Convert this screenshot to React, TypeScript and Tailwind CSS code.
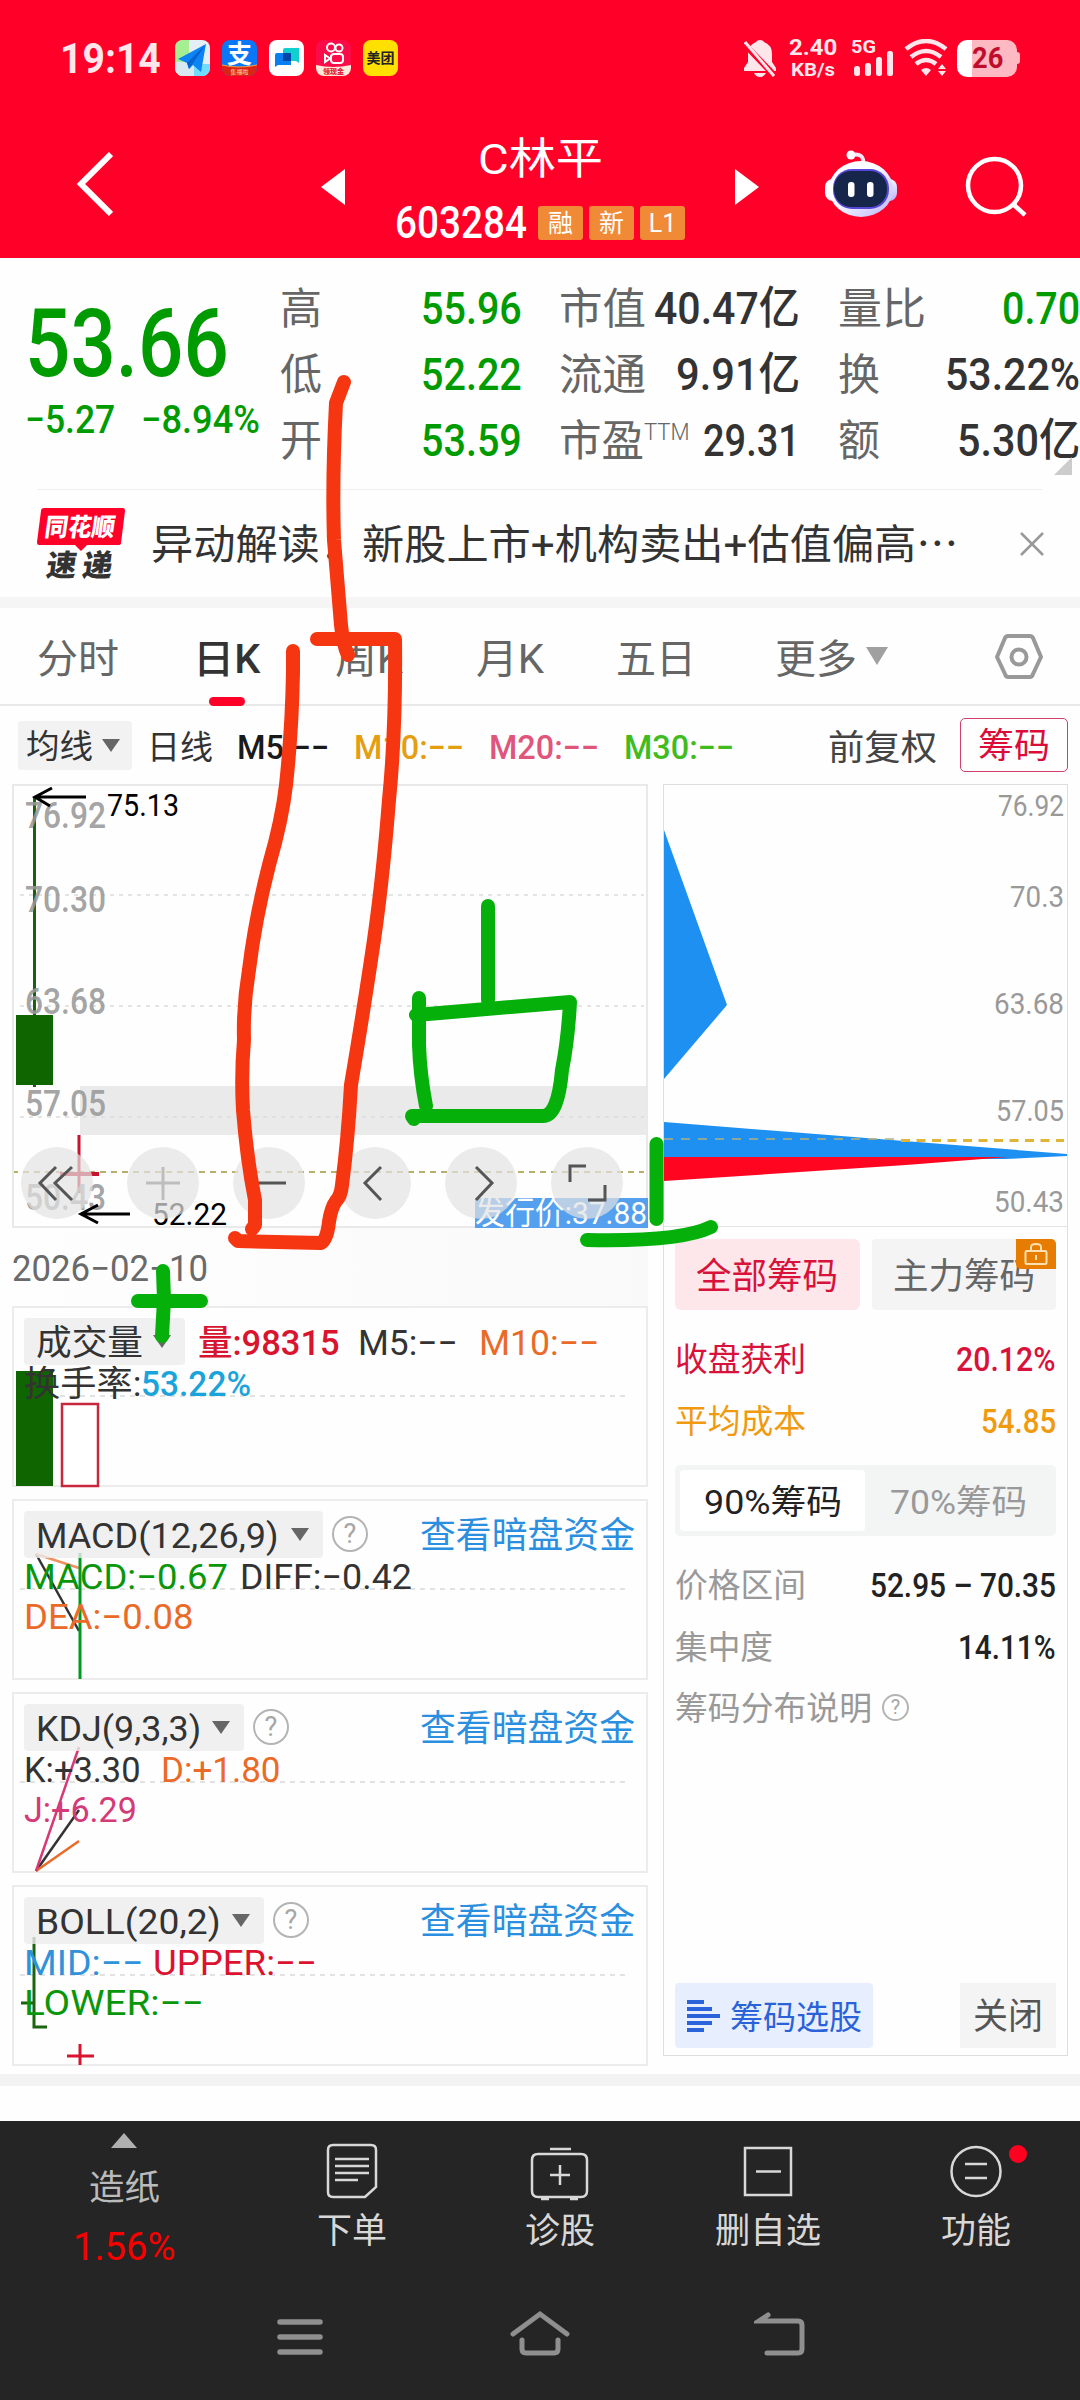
import { useLayoutEffect, useRef, useState, type ReactNode } from 'react';

// ---------------------------------------------------------------------------
// Fit — squeezes one line of text to the width of its box
// ---------------------------------------------------------------------------
interface FitProps {
  children: ReactNode;
  className?: string;
}

function Fit({ children, className = '' }: FitProps) {
  const outer = useRef<HTMLSpanElement>(null);
  const inner = useRef<HTMLSpanElement>(null);
  const [scale, setScale] = useState(1);

  useLayoutEffect(() => {
    if (!outer.current || !inner.current) return;
    setScale(outer.current.clientWidth / inner.current.offsetWidth);
  }, []);

  return (
    <span ref={outer} className={`block shrink-0 whitespace-nowrap leading-none ${className}`}>
      <span ref={inner} className="inline-block origin-left" style={{ transform: `scaleX(${scale})` }}>
        {children}
      </span>
    </span>
  );
}

function Caret({ className = 'fill-[#666]' }: { className?: string }) {
  return (
    <svg viewBox="0 0 18 13" className={`h-[13px] w-[18px] shrink-0 ${className}`}>
      <path d="M0 0h18L9 13z" />
    </svg>
  );
}

function Help({ className = '' }: { className?: string }) {
  return (
    <span
      className={`flex shrink-0 items-center justify-center rounded-full border-[#b4b4b4] leading-none text-[#a6a6a6] ${className}`}
    >
      ?
    </span>
  );
}

// ---------------------------------------------------------------------------
// StatusBar
// ---------------------------------------------------------------------------
function StatusBar() {
  return (
    <div className="flex h-[116px] items-center pl-[60px] text-white">
      <Fit className="w-[101px] text-[43px] font-bold text-[#ffe6ea]">19:14</Fit>

      <div className="ml-[14px] flex gap-[12px]">
        <svg viewBox="0 0 35 36" className="h-9 w-[35px] rounded-[8px] bg-[#e4eef5]">
          <path d="M0 0h14v36H0z" fill="#a5ee91" />
          <path d="M19 24h16v12H19z" fill="#72dcff" />
          <path d="M0 22h19v14H0z" fill="#d9e9f2" />
          <path d="M31 4 3 19l9 4 2 6 4-4 8 7z" fill="#0d84f5" />
          <path d="M31 4 12 23l2 6z" fill="#0763cf" />
        </svg>
        <svg viewBox="0 0 35 36" className="h-9 w-[35px] rounded-[8px] bg-[#0877f8]">
          <text x="17.5" y="23" fontSize="25" fontWeight="700" textAnchor="middle" fill="#fff">支</text>
          <path d="M0 25q17 4 35 0v11H0z" fill="#d92416" />
          <path d="M0 25q17 4 35 0" stroke="#f5a142" fill="none" />
          <text x="17.5" y="34" fontSize="6" textAnchor="middle" fill="#ffd9a0">集福啦</text>
        </svg>
        <svg viewBox="0 0 35 36" className="h-9 w-[35px] rounded-[8px] bg-white">
          <path d="M16 8h14v15l-3-2H14V10q0-2 2-2z" fill="#0fd0cf" />
          <path d="M8 13h14v12H9l-3 2V15q0-2 2-2z" fill="#0a7ff0" />
          <path d="M14 13h8v8h-8z" fill="#0445a8" />
        </svg>
        <svg viewBox="0 0 35 36" className="h-9 w-[35px] rounded-[8px] bg-[#fb0b48]">
          <g fill="none" stroke="#fff" strokeWidth="2">
            <circle cx="15" cy="7.500" r="4" />
            <circle cx="23" cy="8" r="3.500" />
            <rect x="15" y="14" width="12" height="9" rx="3" />
            <path d="m9 15 5 3.500L9 22z" />
          </g>
          <path d="M0 25q17 4 35 0v11H0z" fill="#ffe9d8" />
          <text x="17.500" y="34" fontSize="7" fontWeight="900" textAnchor="middle" fill="#e0203a">领现金</text>
        </svg>
        <svg viewBox="0 0 35 36" className="h-9 w-[35px] rounded-[8px] bg-[#ffe000]">
          <text x="17.500" y="23" fontSize="14" fontWeight="700" textAnchor="middle" fill="#222">美团</text>
        </svg>
      </div>

      <svg viewBox="0 0 32 38" className="ml-[346px] h-[38px] w-8" fill="#ffe6ea">
        <path d="M16 1q-3 0-4 2-8 3-8 12v8l-4 6v3h32v-3l-4-6v-8q0-9-8-12-1-2-4-2zM10 34h12q-2 4-6 4t-6-4z" />
        <path d="M0 5 30 36" stroke="#ff0029" strokeWidth="6" />
        <path d="M1 3 30 37" stroke="#ffe6ea" strokeWidth="3" />
      </svg>
      <div className="ml-[13px] flex w-[48px] flex-col items-center gap-px font-bold text-[#ffe6ea]">
        <Fit className="w-[48px] text-[22px]">2.40</Fit>
        <Fit className="w-[44px] text-[19px]">KB/s</Fit>
      </div>
      <svg viewBox="0 0 44 38" className="ml-[14px] h-[38px] w-11 overflow-visible" fill="#ffe6ea">
        <text x="0" y="14" fontSize="19" fontWeight="700" textLength="25" lengthAdjust="spacingAndGlyphs">5G</text>
        <rect x="3" y="27" width="6" height="10" rx="2.500" />
        <rect x="14" y="24" width="6" height="13" rx="2.500" />
        <rect x="25" y="18" width="6" height="19" rx="2.500" />
        <rect x="36" y="12" width="6" height="25" rx="2.500" />
      </svg>
      <svg viewBox="0 0 44 38" className="ml-[9px] h-[38px] w-11" fill="none" stroke="#ffe6ea" strokeWidth="4.500">
        <path d="M2 10q20-16 40 0M7 18q15-12 30 0M12 25q10-8 20 0" />
        <path d="M17 31q5-4 10 0l-5 6zM34 30l4-5 4 5zM34 32l4 5 4-5z" fill="#ffe6ea" stroke="none" />
      </svg>
      <div className="ml-[9px] flex items-center">
        <div className="flex h-[37px] w-[60px] items-center justify-center rounded-[10px] bg-linear-to-r from-white from-25% to-[#ffb9c2] to-25%">
          <Fit className="w-[31px] text-[29px] font-bold text-[#c00d2c]">26</Fit>
        </div>
        <div className="h-3 w-[3px] rounded-r-full bg-[#ffb9c2]" />
      </div>
    </div>
  );
}

// ---------------------------------------------------------------------------
// TitleBar
// ---------------------------------------------------------------------------
function TitleBar() {
  return (
    <div className="flex h-[142px] text-white">
      <svg viewBox="77 151 36 66" className="mt-[35px] ml-[77px] h-[66px] w-9" fill="none" stroke="#fff" strokeWidth="6">
        <path d="m111 154-30 30 30 30" />
      </svg>
      <svg viewBox="0 0 24 36" className="mt-[53px] ml-[208px] h-9 w-6 fill-white">
        <path d="M24 0v36L0 18z" />
      </svg>
      <div className="ml-[50px] flex w-[290px] flex-col items-center pt-[22px]">
        <Fit className="h-[46px] w-[125px] text-[43px]">C林平</Fit>
        <div className="mt-[17px] flex items-center gap-[6px]">
          <Fit className="mr-[5px] w-[132px] text-[44px] font-medium">603284</Fit>
          {['融', '新', 'L1'].map((tag) => (
            <span
              key={tag}
              className="flex h-[34px] w-[45px] items-center justify-center rounded-[3px] bg-[#f18a36] text-[25px] leading-none"
            >
              {tag}
            </span>
          ))}
        </div>
      </div>
      <svg viewBox="0 0 24 36" className="mt-[53px] ml-[50px] h-9 w-6 fill-white">
        <path d="M0 0v36l24-18z" />
      </svg>
      <svg viewBox="824 150 74 74" className="mt-[34px] ml-[65px] size-[74px]">
        <defs>
          <linearGradient id="shell" x1="0" y1="0" x2="1" y2="1">
            <stop offset="0.400" stopColor="#ffffff" />
            <stop offset="1" stopColor="#b9b3ff" />
          </linearGradient>
        </defs>
        <rect x="825" y="179" width="72" height="22" rx="8" fill="url(#shell)" />
        <path d="M851 155q14-3 12 10" stroke="#f6e6f5" strokeWidth="4" fill="none" />
        <circle cx="851" cy="155" r="4.500" fill="#fff" />
        <ellipse cx="861" cy="189" rx="32" ry="28" fill="url(#shell)" />
        <rect x="833" y="169" width="56" height="40" rx="19" fill="#5747d8" />
        <rect x="834" y="171" width="53" height="36" rx="17" fill="#16264a" />
        <rect x="848" y="182" width="6.500" height="15" rx="3" fill="#fff" />
        <rect x="867" y="182" width="6.500" height="15" rx="3" fill="#fff" />
      </svg>
      <svg viewBox="964 154 64 66" className="mt-[38px] ml-[66px] h-[66px] w-16" fill="none" stroke="#fff" strokeWidth="4.500">
        <circle cx="994.500" cy="185.500" r="26.500" />
        <path d="m1013 204 12 11" />
      </svg>
    </div>
  );
}

// ---------------------------------------------------------------------------
// Quote — last price and the key figures
// ---------------------------------------------------------------------------
const FIGURES = [
  {
    box: 'w-[242px]',
    rows: [
      { label: '高', lw: 'w-[42px]', value: '55.96', vw: 'w-[101px]', color: 'text-[#009b00]' },
      { label: '低', lw: 'w-[42px]', value: '52.22', vw: 'w-[101px]', color: 'text-[#009b00]' },
      { label: '开', lw: 'w-[42px]', value: '53.59', vw: 'w-[101px]', color: 'text-[#009b00]' },
    ],
  },
  {
    box: 'w-[241px] ml-[37px]',
    rows: [
      { label: '市值', lw: 'w-[87px]', value: '40.47亿', vw: 'w-[146px]', color: 'text-[#333]' },
      { label: '流通', lw: 'w-[87px]', value: '9.91亿', vw: 'w-[124px]', color: 'text-[#333]' },
      { label: '市盈', lw: 'w-[85px]', value: '29.31', vw: 'w-[97px]', color: 'text-[#333]' },
    ],
  },
  {
    box: 'w-[242px] ml-[38px]',
    rows: [
      { label: '量比', lw: 'w-[88px]', value: '0.70', vw: 'w-[78px]', color: 'text-[#009b00]' },
      { label: '换', lw: 'w-[42px]', value: '53.22%', vw: 'w-[135px]', color: 'text-[#333]' },
      { label: '额', lw: 'w-[42px]', value: '5.30亿', vw: 'w-[123px]', color: 'text-[#333]' },
    ],
  },
];

function Quote() {
  return (
    <div className="relative flex h-[231px] bg-[#fefefe]">
      <div className="w-[280px] pt-[39px] pl-[25px] text-[#009b00]">
        <Fit className="h-[93px] w-[204px] text-[94px] font-medium">53.66</Fit>
        <div className="mt-[11px] flex text-[39px] font-medium">
          <Fit className="w-[90px]">−5.27</Fit>
          <Fit className="ml-[26px] w-[119px]">−8.94%</Fit>
        </div>
      </div>
      {FIGURES.map((col, i) => (
        <div key={i} className={`pt-[17px] ${col.box}`}>
          {col.rows.map((row) => (
            <div key={row.label} className="flex h-[66px] items-center">
              <Fit className={`pt-[2px] text-[43px] text-[#666] ${row.lw}`}>{row.label}</Fit>
              {row.label === '市盈' && <Fit className="mb-4 w-[46px] text-[24px] font-light text-[#666]">TTM</Fit>}
              <Fit className={`ml-auto text-[45px] font-medium ${row.vw} ${row.color}`}>{row.value}</Fit>
            </div>
          ))}
        </div>
      ))}
      <svg viewBox="0 0 18 18" className="absolute right-2 bottom-[14px] size-[18px] fill-[#ccc]">
        <path d="M18 0v18H0z" />
      </svg>
    </div>
  );
}

function NewsTicker() {
  return (
    <div className="flex h-[108px] items-center bg-[#fefefe] pl-[37px]">
      <div className="w-full">
        <div className="-mt-px mr-[38px] h-[2px] bg-[#efefef]" />
        <div className="flex h-[107px] items-center">
          <svg viewBox="37 507 88 72" className="h-[72px] w-[88px] overflow-visible">
            <path d="M44 507h79q2 0 2 3l-4 32q0 2-3 2H87l-6 6-6-6H39q-2 0-2-3l4-31q0-3 3-3z" fill="#ff0029" />
            <g transform="skewX(-8)" fontWeight="900">
              <text x="119" y="535" fontSize="25" textLength="70" lengthAdjust="spacingAndGlyphs" fill="#fff">同花顺</text>
              <text x="126" y="575" fontSize="30" textLength="66" fill="#333">速递</text>
            </g>
          </svg>
          <Fit className="ml-[26px] w-[808px] pt-[4px] text-[41px] text-[#333]">异动解读：新股上市+机构卖出+估值偏高⋯</Fit>
          <svg viewBox="0 0 24 24" className="ml-[61px] size-6" stroke="#999" strokeWidth="2.500">
            <path d="m1 1 22 22M23 1 1 23" />
          </svg>
        </div>
      </div>
    </div>
  );
}

// ---------------------------------------------------------------------------
// PeriodTabs
// ---------------------------------------------------------------------------
const TABS = [
  { label: '分时', box: 'w-[82px]' },
  { label: '日K', box: 'w-[67px] ml-[74px]', active: true },
  { label: '周K', box: 'w-[68px] ml-[75px]' },
  { label: '月K', box: 'w-[68px] ml-[73px]' },
  { label: '五日', box: 'w-[80px] ml-[72px]' },
  { label: '更多', box: 'w-[82px] ml-[79px]' },
];

function PeriodTabs() {
  return (
    <div className="flex h-[98px] items-center border-b-2 border-[#e9e9e9] bg-[#fefefe] pl-[37px]">
      {TABS.map((tab) => (
        <div key={tab.label} className={`relative text-[40px] ${tab.box} ${tab.active ? 'font-medium text-[#333]' : 'text-[#666]'}`}>
          <Fit className="mt-[7px]">{tab.label}</Fit>
          {tab.active && <div className="absolute -bottom-[26px] left-[16px] h-[9px] w-9 rounded-full bg-[#ff0029]" />}
        </div>
      ))}
      <svg viewBox="0 0 22 18" className="ml-[9px] h-[18px] w-[22px] fill-[#a0a0a0]">
        <path d="M0 0h22L11 18z" />
      </svg>
      <svg viewBox="0 0 50 48" className="mt-[2px] ml-[106px] h-12 w-[50px]" fill="none" stroke="#999" strokeWidth="4" strokeLinejoin="round">
        <path d="M14 3h22q2 0 3 2l8 19-8 17q-1 3-3 3H14q-2 0-3-3L3 24l8-19q1-2 3-2z" />
        <circle cx="25" cy="24" r="7.500" />
      </svg>
    </div>
  );
}

function AverageBar() {
  return (
    <div className="flex h-[78px] items-center bg-[#fefefe] pl-[18px] text-[33px]">
      <div className="flex h-[49px] w-[114px] items-center justify-between rounded-[3px] bg-[#f2f2f2] pr-3 pl-2 text-[#333]">
        <Fit className="w-[67px] pt-[3px]">均线</Fit>
        <Caret />
      </div>
      <Fit className="ml-[15px] w-[66px] pt-[5px] text-[#333]">日线</Fit>
      <Fit className="ml-[24px] w-[92px] pt-[5px] font-medium text-[#1a1a1a]">M5:−−</Fit>
      <Fit className="ml-[25px] w-[110px] pt-[5px] font-medium text-[#e49e12]">M10:−−</Fit>
      <Fit className="ml-[25px] w-[110px] pt-[5px] font-medium text-[#e0557c]">M20:−−</Fit>
      <Fit className="ml-[25px] w-[110px] pt-[5px] font-medium text-[#40bc20]">M30:−−</Fit>
      <Fit className="ml-[94px] w-[109px] pt-[7px] text-[35px] text-[#444]">前复权</Fit>
      <div className="ml-[23px] flex h-[54px] w-[108px] items-center justify-center rounded-[5px] border-[1.500px] border-[#d0406a] text-[#dc0c38]">
        <Fit className="w-[72px] pt-[2px] text-[35px]">筹码</Fit>
      </div>
    </div>
  );
}

// ---------------------------------------------------------------------------
// CandleChart
// ---------------------------------------------------------------------------
const TOOLS = [
  { id: 'first', d: 'M35 20 19 36l16 17M51 20 34 36l17 17' },
  { id: 'zoom-in', d: 'M19 36h34M36 20v33', faint: true },
  { id: 'zoom-out', d: 'M19 36h34' },
  { id: 'prev', d: 'M42 20 26 36l16 17' },
  { id: 'next', d: 'M31 20l16 16-16 17' },
  { id: 'expand', d: 'M35 19H19v16M54 38v15H37' },
];

function CandleChart() {
  return (
    <div className="relative h-[444px] w-[636px]">
      <svg viewBox="12 784 636 444" className="block h-full w-full overflow-visible">
        <rect x="80" y="1086" width="568" height="49" fill="#eaeaea" />
        <g stroke="#dcdcdc" strokeWidth="1.500" strokeDasharray="4 5">
          <path d="M20 895h624M20 1006h624M20 1117h624" />
        </g>
        <path d="M12 1172h632" stroke="#b8b06a" strokeWidth="2" strokeDasharray="6 5" />
        <rect x="13" y="785" width="634" height="442" fill="none" stroke="#e9e9e9" strokeWidth="2" />
        <path d="M34.500 797v290" stroke="#1c5f10" strokeWidth="3" />
        <rect x="16" y="1015" width="37" height="70" fill="#0f6600" />
        <path d="M79 1135v58" stroke="#c8142f" strokeWidth="3" />
        <path d="M60 1174h39" stroke="#c8142f" strokeWidth="4" />
        <g fill="#999" fillOpacity="0.900" fontSize="36" fontWeight="500">
          <text x="25" y="828" textLength="81" lengthAdjust="spacingAndGlyphs">76.92</text>
          <text x="25" y="912" textLength="81" lengthAdjust="spacingAndGlyphs">70.30</text>
          <text x="25" y="1014" textLength="81" lengthAdjust="spacingAndGlyphs">63.68</text>
          <text x="25" y="1116" textLength="81" lengthAdjust="spacingAndGlyphs">57.05</text>
          <text x="25" y="1210" textLength="81" lengthAdjust="spacingAndGlyphs">50.43</text>
        </g>
        <g stroke="#000" strokeWidth="3" fill="none">
          <path d="M86 797H35M52 788l-17 9 15 9" />
          <path d="M130 1214H81M98 1205l-17 9 17 9" />
        </g>
        <g fontSize="32">
          <text x="107" y="816" textLength="72" lengthAdjust="spacingAndGlyphs">75.13</text>
          <text x="152" y="1225" textLength="75" lengthAdjust="spacingAndGlyphs">52.22</text>
        </g>
        <rect x="475" y="1198" width="173" height="30" fill="#549fee" />
        <text x="475" y="1224" fontSize="32" fill="#fff" textLength="172" lengthAdjust="spacingAndGlyphs">发行价:37.88</text>
      </svg>
      <div className="absolute top-[363px] left-[9px] flex gap-[34px]">
        {TOOLS.map((tool) => (
          <svg key={tool.id} viewBox="0 0 72 72" className="size-[72px] rounded-full bg-[#e2e2e2]/70" fill="none">
            <path d={tool.d} stroke={tool.faint ? '#bdbdbd' : '#555'} strokeWidth="3" />
          </svg>
        ))}
      </div>
    </div>
  );
}

// ---------------------------------------------------------------------------
// Indicator — one framed sub chart below the candles
// ---------------------------------------------------------------------------
interface Part {
  text: string;
  box: string;
}

interface IndicatorProps {
  name: string;
  nameBox: string;
  chipBox: string;
  inline?: Part[];
  lines: Part[][];
  children: ReactNode;
}

function Indicator({ name, nameBox, chipBox, inline, lines, children }: IndicatorProps) {
  return (
    <div className="relative h-[181px] border-2 border-[#ececec] text-[35px]">
      <svg viewBox="14 2 632 177" className="absolute inset-0 h-[177px] w-[632px] overflow-visible" fill="none">
        <path d="M20 90h606" stroke="#d9d9d9" strokeWidth="1.500" strokeDasharray="5 5" />
        {children}
      </svg>
      <div className="relative mt-[10px] flex h-[46px] items-center pl-[10px]">
        <div className={`flex h-[47px] items-center justify-between rounded-[4px] bg-[#ececec]/80 pr-[14px] pl-[12px] text-[#333] ${chipBox}`}>
          <Fit className={`pt-[4px] ${nameBox}`}>{name}</Fit>
          <Caret />
        </div>
        {inline ? (
          inline.map((part) => (
            <Fit key={part.text} className={`pt-[4px] ${part.box}`}>
              {part.text}
            </Fit>
          ))
        ) : (
          <>
            <Help className="ml-[9px] size-[36px] border-[2.500px] text-[27px]" />
            <Fit className="mr-[11px] ml-auto w-[215px] pt-[4px] text-[36px] text-[#2b8fe0]">查看暗盘资金</Fit>
          </>
        )}
      </div>
      {lines.map((line, i) => (
        <div key={i} className="relative flex h-[40px] items-center pl-[10px]">
          {line.map((part) => (
            <Fit key={part.text} className={part.box}>
              {part.text}
            </Fit>
          ))}
        </div>
      ))}
    </div>
  );
}

function Indicators() {
  return (
    <div className="flex flex-col gap-3">
      <Indicator
        name="成交量"
        nameBox="w-[107px]"
        chipBox="w-[161px]"
        inline={[
          { text: '量:98315', box: 'ml-[13px] w-[142px] font-medium text-[#d8142f]' },
          { text: 'M5:−−', box: 'ml-[18px] w-[100px] text-[#333]' },
          { text: 'M10:−−', box: 'ml-[21px] w-[120px] text-[#ea6a28]' },
        ]}
        lines={[
          [
            { text: '换手率:', box: 'w-[117px] text-[#333]' },
            { text: '53.22%', box: 'w-[110px] font-medium text-[#1ba4da]' },
          ],
        ]}
      >
        <rect x="16" y="65" width="37" height="115" fill="#0f6600" />
        <rect x="62" y="98" width="36" height="82" fill="#fff" stroke="#c8283c" strokeWidth="2.500" />
      </Indicator>
      <Indicator
        name="MACD(12,26,9)"
        nameBox="w-[243px]"
        chipBox="w-[299px]"
        lines={[
          [
            { text: 'MACD:−0.67', box: 'w-[204px] text-[#0a960a]' },
            { text: 'DIFF:−0.42', box: 'ml-[12px] w-[172px] text-[#333]' },
          ],
          [{ text: 'DEA:−0.08', box: 'w-[169px] text-[#ea6a28]' }],
        ]}
      >
        <path d="m36 55 43 77" stroke="#333" strokeWidth="2.500" />
        <path d="m36 55 43 14" stroke="#ee9060" strokeWidth="2.500" />
        <path d="M80 54v126" stroke="#009b1c" strokeWidth="3" />
      </Indicator>
      <Indicator
        name="KDJ(9,3,3)"
        nameBox="w-[165px]"
        chipBox="w-[220px]"
        lines={[
          [
            { text: 'K:+3.30', box: 'w-[117px] text-[#333]' },
            { text: 'D:+1.80', box: 'ml-[20px] w-[120px] text-[#ea6a28]' },
          ],
          [{ text: 'J:+6.29', box: 'w-[113px] text-[#d43a78]' }],
        ]}
      >
        <path d="m36 179 43-61" stroke="#333" strokeWidth="2.500" />
        <path d="m36 179 43-30" stroke="#ea6a28" strokeWidth="2.500" />
        <path d="m36 179 43-124" stroke="#d43a78" strokeWidth="2.500" />
      </Indicator>
      <Indicator
        name="BOLL(20,2)"
        nameBox="w-[185px]"
        chipBox="w-[240px]"
        lines={[
          [
            { text: 'MID:−−', box: 'w-[120px] text-[#2f92da]' },
            { text: 'UPPER:−−', box: 'ml-[9px] w-[164px] text-[#dc1230]' },
          ],
          [{ text: 'LOWER:−−', box: 'w-[180px] text-[#0a960a]' }],
        ]}
      >
        <path d="M34 52v90h13M21 118h13" stroke="#1c6410" strokeWidth="3" />
        <path d="M80 159v21M67 171h27" stroke="#d8142f" strokeWidth="3" />
      </Indicator>
    </div>
  );
}

// ---------------------------------------------------------------------------
// ChipPanel — cost distribution on the right
// ---------------------------------------------------------------------------
function ChipRow({ children }: { children: ReactNode }) {
  return <div className="flex h-[62px] items-center justify-between">{children}</div>;
}

function ChipPanel() {
  return (
    <div className="flex h-[1272px] w-[405px] flex-col border border-[#dedede]">
      <svg viewBox="664 785 403 441" className="block h-[441px] w-[403px] shrink-0">
        <path d="M664 830 727 1005 664 1079z" fill="#1e90f2" />
        <path d="M664 1122 1068 1154v2l-63 3-341-1z" fill="#1e90f2" />
        <path d="M664 1157h344l-102 8-242 16z" fill="#ff0520" />
        <path d="M664 1139h232" stroke="#b3b07c" strokeWidth="1.500" strokeDasharray="9 8" />
        <path d="M901 1140.500h163" stroke="#e0b437" strokeWidth="3" strokeDasharray="9 6.500" />
        <g fontSize="29" fill="#999">
          <text x="998" y="816" textLength="66" lengthAdjust="spacingAndGlyphs">76.92</text>
          <text x="1010" y="907" textLength="54" lengthAdjust="spacingAndGlyphs">70.3</text>
          <text x="994" y="1014" textLength="70" lengthAdjust="spacingAndGlyphs">63.68</text>
          <text x="996" y="1121" textLength="68" lengthAdjust="spacingAndGlyphs">57.05</text>
          <text x="994" y="1212" textLength="70" lengthAdjust="spacingAndGlyphs">50.43</text>
        </g>
      </svg>
      <div className="flex flex-1 flex-col border-t border-[#e4e4e4] px-[11px] pt-[12px] pb-[7px] text-[33px]">
        <div className="relative flex h-[71px] gap-[12px] text-[36px]">
          <div className="flex flex-1 items-center justify-center rounded-[6px] bg-[#fde7eb] text-[#d8123a]">
            <Fit className="w-[142px] pt-[5px]">全部筹码</Fit>
          </div>
          <div className="flex flex-1 items-center justify-center rounded-[4px] bg-[#f4f4f4] text-[#666]">
            <Fit className="w-[142px] pt-[5px]">主力筹码</Fit>
          </div>
          <div className="absolute top-0 right-0 flex h-[30px] w-10 items-center justify-center rounded-tr-[5px] rounded-bl-[5px] bg-[#e67c00]">
            <svg viewBox="0 0 24 24" className="size-6" fill="none" stroke="#ffe0b0" strokeWidth="2">
              <rect x="1.500" y="9" width="21" height="13" rx="1.500" />
              <path d="M7 9V5q0-3 5-3t5 3v4M12 13v5" />
            </svg>
          </div>
        </div>
        <div className="mt-[18px]">
          <ChipRow>
            <Fit className="w-[131px] text-[#d8123a]">收盘获利</Fit>
            <Fit className="w-[100px] font-medium text-[#d8123a]">20.12%</Fit>
          </ChipRow>
          <ChipRow>
            <Fit className="w-[131px] text-[#f09a10]">平均成本</Fit>
            <Fit className="w-[75px] font-medium text-[#f09a10]">54.85</Fit>
          </ChipRow>
        </div>
        <div className="mt-[13px] flex h-[71px] rounded-[5px] bg-[#f3f4f4] p-[5px]">
          <div className="flex w-[185px] items-center justify-center rounded-[4px] bg-white text-[#222]">
            <Fit className="w-[138px] pt-[3px] text-[34px]">90%筹码</Fit>
          </div>
          <div className="flex flex-1 items-center justify-center text-[#999]">
            <Fit className="w-[137px] pt-[3px] text-[34px]">70%筹码</Fit>
          </div>
        </div>
        <div className="mt-[18px] text-[#999]">
          <ChipRow>
            <Fit className="w-[131px]">价格区间</Fit>
            <Fit className="w-[186px] font-medium text-[#222]">52.95 – 70.35</Fit>
          </ChipRow>
          <ChipRow>
            <Fit className="w-[98px]">集中度</Fit>
            <Fit className="w-[98px] font-medium text-[#222]">14.11%</Fit>
          </ChipRow>
          <div className="-mt-px flex h-[62px] items-center">
            <Fit className="w-[197px]">筹码分布说明</Fit>
            <Help className="mb-[2px] ml-[10px] size-[27px] border-2 text-[20px]" />
          </div>
        </div>
        <div className="mt-auto flex h-[65px] justify-between">
          <div className="flex w-[198px] items-center rounded-[4px] bg-[#e7effe] pl-[12px] text-[#2a62da]">
            <svg viewBox="0 0 33 32" className="h-8 w-[33px] fill-[#2a62da]">
              <path d="M0 0h17v4H0zM0 7h25v4H0zM0 14h33v4H0zM0 21h25v4H0zM0 28h17v4H0z" />
            </svg>
            <Fit className="ml-[10px] w-[132px] pt-[3px]">筹码选股</Fit>
          </div>
          <div className="flex w-[96px] items-center justify-center bg-[#f4f4f4] text-[36px] text-[#555]">
            <Fit className="w-[70px] pt-[3px]">关闭</Fit>
          </div>
        </div>
      </div>
    </div>
  );
}

// ---------------------------------------------------------------------------
// BottomNav
// ---------------------------------------------------------------------------
function BottomNav() {
  return (
    <div className="h-[279px] bg-[#252525] text-[35px] text-[#d8d8d8]">
      <div className="flex h-[160px]">
        <div className="flex w-[248px] flex-col items-center pt-[12px] text-[#bbb]">
          <svg viewBox="0 0 26 15" className="h-[15px] w-[26px] fill-[#b0b0b0]">
            <path d="M0 15h26L13 0z" />
          </svg>
          <Fit className="mt-[23px] w-[71px]">造纸</Fit>
          <Fit className="mt-[22px] w-[103px] text-[39px] text-[#f80000]">1.56%</Fit>
        </div>
        <div className="flex w-[208px] flex-col items-center pt-[20px]">
          <svg viewBox="0 0 52 60" className="h-[60px] w-[52px]" fill="none" stroke="currentColor" strokeWidth="2.500">
            <path d="M7 4h38q5 0 5 5v37L39 56H7q-5 0-5-5V9q0-5 5-5z" />
            <path d="M9 18h34M9 25h34M9 32h34M9 39h23" />
          </svg>
          <Fit className="mt-[13px] w-[70px]">下单</Fit>
        </div>
        <div className="flex w-[208px] flex-col items-center pt-[20px]">
          <svg viewBox="0 0 60 60" className="size-[60px]" fill="none" stroke="currentColor" strokeWidth="2.500">
            <path d="M8 13h43q6 0 6 6v31q0 6-6 6H8q-6 0-6-6V19q0-6 6-6zM20 8h21M11 58h8M40 58h8M30 24v20M20 34h20" />
          </svg>
          <Fit className="mt-[13px] w-[70px]">诊股</Fit>
        </div>
        <div className="flex w-[208px] flex-col items-center pt-[20px]">
          <svg viewBox="0 0 60 60" className="size-[60px]" fill="none" stroke="currentColor" strokeWidth="2.500">
            <path d="M7 7h46v47H7zM18 30.500h25" />
          </svg>
          <Fit className="mt-[13px] w-[106px]">删自选</Fit>
        </div>
        <div className="relative flex w-[208px] flex-col items-center pt-[20px]">
          <svg viewBox="0 0 60 60" className="size-[60px]" fill="none" stroke="currentColor" strokeWidth="2.500">
            <circle cx="30" cy="30.500" r="24.500" />
            <path d="M19 23h22M19 37h22" />
          </svg>
          <Fit className="mt-[13px] w-[70px]">功能</Fit>
          <div className="absolute top-[24px] left-[137px] size-[18px] rounded-full bg-[#ff0020]" />
        </div>
      </div>
      <div className="flex pt-[29px] pl-[276px]">
        <svg viewBox="276 2310 48 48" className="size-12" stroke="#8f8f8f" strokeWidth="5.500" strokeLinecap="round">
          <path d="M280 2322h40M280 2337h40M280 2352h40" />
        </svg>
        <svg viewBox="510 2310 60 48" className="ml-[186px] h-12 w-[60px]" fill="none" stroke="#8f8f8f" strokeWidth="5" strokeLinecap="round">
          <path d="m513 2334 27-20 27 20M522 2340v9q0 4 4 4h28q4 0 4-4v-9" />
        </svg>
        <svg viewBox="754 2310 52 48" className="ml-[184px] h-12 w-[52px]" fill="none" stroke="#8f8f8f" strokeWidth="5" strokeLinecap="round">
          <path d="m768 2315-9 6h39q4 0 4 4v24q0 4-4 4h-31" />
        </svg>
      </div>
    </div>
  );
}

// Freehand marks drawn over the whole screen
function Scribbles() {
  return (
    <svg
      viewBox="0 0 1080 2400"
      className="pointer-events-none absolute inset-0 h-[2400px] w-[1080px]"
      fill="none"
      strokeWidth="14"
      strokeLinecap="round"
      strokeLinejoin="round"
    >
      <g stroke="#f53611">
        <path d="M344 382 336 403Q332 480 334 540L341 625Q343 645 348 655" />
        <path d="M317 639H395Q396 730 389 800Q382 890 371 960Q362 1020 351 1085Q348 1140 342 1185Q341 1196 336 1201Q331 1208 329 1222Q327 1240 321 1243L238 1241 235 1238" />
        <path d="M293 651V672Q292 730 286 785Q282 820 269 865Q255 920 249 970Q243 1005 244 1040Q241 1075 243 1110Q247 1160 255 1200V1225L252 1229" />
      </g>
      <g stroke="#05b00b">
        <path d="M488 906V1000" />
        <path d="M419 998V1045Q420 1075 426 1106" />
        <path d="M416 1015 570 1002Q568 1040 562 1070Q558 1116 543 1116H412L414 1119" />
        <path d="M656.500 1144V1219" />
        <path d="M587 1240Q680 1242 711 1227" />
        <path d="M163 1271 164 1300 162 1336M138 1301H201" />
      </g>
    </svg>
  );
}

export default function App() {
  return (
    <div className="relative h-[2400px] w-[1080px] overflow-hidden bg-[#fefefe] font-[Roboto,'Noto_Sans_CJK_SC',sans-serif]">
      <header className="h-[258px] bg-[#ff0029]">
        <StatusBar />
        <TitleBar />
      </header>
      <Quote />
      <NewsTicker />
      <div className="h-[11px] bg-[#f5f5f5]" />
      <PeriodTabs />
      <AverageBar />
      <main className="flex h-[1290px] gap-[15px] pl-[12px]">
        <div className="w-[636px]">
          <CandleChart />
          <div className="flex h-[78px] items-center bg-linear-to-r from-[#fefefe] to-[#f9f9f9] pt-[4px]">
            <Fit className="w-[196px] text-[36px] text-[#6a6a6a]">2026−02−10</Fit>
          </div>
          <Indicators />
        </div>
        <ChipPanel />
      </main>
      <div className="mb-[35px] h-[12px] bg-[#f3f3f3]" />
      <BottomNav />
      <Scribbles />
    </div>
  );
}
